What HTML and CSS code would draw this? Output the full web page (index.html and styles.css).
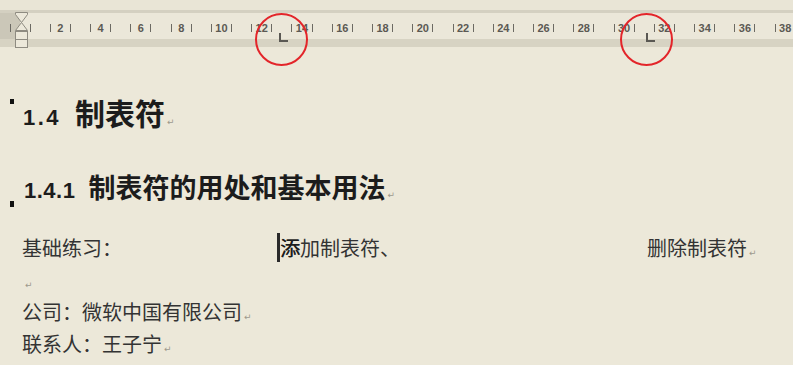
FILE: index.html
```html
<!DOCTYPE html>
<html lang="zh">
<head>
<meta charset="utf-8">
<title>制表符</title>
<link rel="stylesheet" href="styles.css">
</head>
<body>
<div class="chrome">
  <div class="strip"></div>
  <div class="ruler-edge"></div>
  <div class="ruler">
    <div class="cell"><i></i><i></i></div>
    <div class="cell"><i></i><b>2</b><i></i></div>
    <div class="cell"><i></i><b>4</b><i></i></div>
    <div class="cell"><i></i><b>6</b><i></i></div>
    <div class="cell"><i></i><b>8</b><i></i></div>
    <div class="cell"><i></i><b>10</b><i></i></div>
    <div class="cell"><i></i><b>12</b><i></i></div>
    <div class="cell"><i></i><b>14</b><i></i></div>
    <div class="cell"><i></i><b>16</b><i></i></div>
    <div class="cell"><i></i><b>18</b><i></i></div>
    <div class="cell"><i></i><b>20</b><i></i></div>
    <div class="cell"><i></i><b>22</b><i></i></div>
    <div class="cell"><i></i><b>24</b><i></i></div>
    <div class="cell"><i></i><b>26</b><i></i></div>
    <div class="cell"><i></i><b>28</b><i></i></div>
    <div class="cell"><i></i><b>30</b><i></i></div>
    <div class="cell"><i></i><b>32</b><i></i></div>
    <div class="cell"><i></i><b>34</b><i></i></div>
    <div class="cell"><i></i><b>36</b><i></i></div>
    <div class="cell"><i></i><b>38</b><i></i></div>
  </div>
  <div class="ruler-bottom"></div>
  <svg class="indent" width="15" height="37" viewBox="0 0 15 37">
    <polygon points="1.5,0.5 13.5,0.5 13.5,2.5 7.5,10.5 1.5,2.5" fill="#ece8da" stroke="#8e8b81" stroke-width="1"/>
    <polygon points="7.5,10.5 13.5,18.5 1.5,18.5" fill="#ece8da" stroke="#8e8b81" stroke-width="1"/>
    <rect x="1.5" y="19.5" width="12" height="16" fill="#ece8da" stroke="#8e8b81" stroke-width="1"/>
    <line x1="1.5" y1="27.5" x2="13.5" y2="27.5" stroke="#8e8b81" stroke-width="1"/>
  </svg>
  <span class="tab tab-a"></span>
  <span class="tab tab-b"></span>
  <span class="circle circle-a"></span>
  <span class="circle circle-b"></span>
</div>
<main class="page">
  <h1 class="h1"><span class="num">1.4</span>制表符<span class="pm">↵</span></h1>
  <h2 class="h2"><span class="num">1.4.1</span>制表符的用处和基本用法<span class="pm">↵</span></h2>
  <div class="tabline">
    <span>基础练习：</span>
    <span><span class="cursor">添</span>加制表符、</span>
    <span>删除制表符<span class="pm">↵</span></span>
  </div>
  <p class="line"><span class="pm pm-empty">↵</span></p>
  <p class="line">公司：微软中国有限公司<span class="pm">↵</span></p>
  <p class="line">联系人：王子宁<span class="pm">↵</span></p>
</main>
</body>
</html>
```

FILE: styles.css
```css
html, body {
  margin: 0;
  padding: 0;
}
body {
  width: 793px;
  height: 365px;
  overflow: hidden;
  background: #ece8d9;
  font-family: "Noto Sans CJK SC", "Noto Sans", sans-serif;
  color: #333;
}
.chrome {
  position: relative;
  height: 47px;
}
.strip {
  height: 10px;
  background: #e9e5d6;
}
.ruler-edge {
  height: 3px;
  background: #d4d0c1;
}
.ruler {
  height: 26px;
  display: grid;
  grid-template-columns: repeat(20, 40.28px);
  background: linear-gradient(to right, #cbc7b8 0, #cbc7b8 20px, #ebe7d9 20px);
  overflow: hidden;
}
.cell {
  display: flex;
  align-items: center;
  justify-content: space-between;
  padding: 0 9.6px;
}
.cell i {
  display: block;
  width: 1px;
  height: 8px;
  background: #6c6a63;
  margin-top: 3px;
}
.cell b {
  font-family: "Liberation Sans", Arial, sans-serif;
  font-weight: bold;
  font-size: 11px;
  color: #5b5953;
  margin-top: 3px;
}
.ruler-bottom {
  height: 8px;
  background: #d7d3c3;
}
.indent {
  position: absolute;
  left: 14px;
  top: 12px;
}
.tab {
  position: absolute;
  top: 33px;
  width: 7px;
  height: 7px;
  border-left: 2px solid #5a5853;
  border-bottom: 2px solid #5a5853;
}
.tab-a { left: 279px; }
.tab-b { left: 646px; }
.circle {
  position: absolute;
  top: 13px;
  width: 49px;
  height: 49px;
  border: 2px solid #e3252a;
  border-radius: 50%;
}
.circle-a { left: 255px; }
.circle-b { left: 620px; }

.page {
  padding-left: 22px;
}
.h1, .h2 {
  position: relative;
  margin: 0;
  font-weight: bold;
  color: #1c1c1c;
  white-space: nowrap;
}
.h1 {
  margin-top: 45px;
  font-size: 30px;
  line-height: 40px;
}
.h1::before, .h2::before {
  content: "";
  position: absolute;
  left: -12px;
  width: 4px;
  background: #111;
}
.h1::before {
  top: 7px;
  height: 5px;
}
.h2::before {
  top: 32px;
  height: 6px;
}
.h2 {
  margin-top: 37px;
  font-size: 27px;
  line-height: 36px;
}
.num {
  font-family: "Liberation Sans", Arial, sans-serif;
  font-weight: bold;
  line-height: 0;
}
.h1 .num {
  font-size: 22px;
  letter-spacing: 2.5px;
  margin-left: 1px;
  margin-right: 14px;
}
.h2 .num {
  font-size: 22px;
  letter-spacing: 0.5px;
  margin-left: 2px;
  margin-right: 13px;
}
.pm {
  font-family: "DejaVu Sans", sans-serif;
  font-weight: normal;
  font-size: 9px;
  line-height: 0;
  color: #9d998d;
  margin-left: 2px;
}
.tabline, .line {
  font-size: 20px;
  line-height: 32px;
  color: #333;
  white-space: nowrap;
}
.tabline {
  margin-top: 27px;
  display: grid;
  grid-template-columns: 257px 368px auto;
}
.line {
  margin: 0;
}
.pm-empty {
  margin-left: 3px;
}
.cursor {
  border-left: 3px solid #2a2a2a;
  margin-left: -2px;
  color: #1d1d1d;
  text-shadow: 0.4px 0 0 #1d1d1d;
}
```
